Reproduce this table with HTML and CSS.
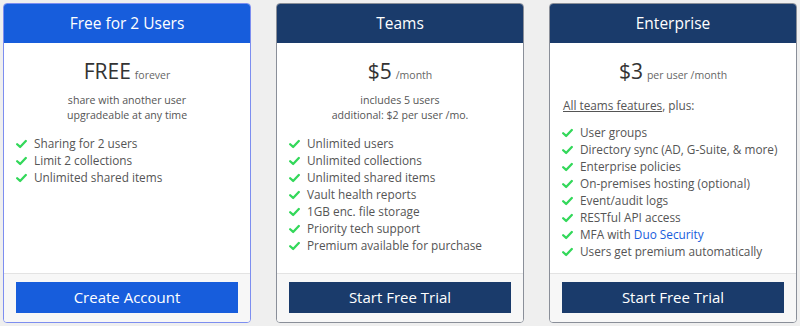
FILE: index.html
```html
<!DOCTYPE html>
<html>
<head>
<meta charset="utf-8">
<link rel="stylesheet" href="styles.css">
</head>
<body>
<svg width="0" height="0" class="defs">
  <defs>
    <symbol id="chk" viewBox="0 0 12 10">
      <path d="M1.3 5.3 L4.5 8.2 L10.7 1.7" fill="none" stroke="currentColor" stroke-width="2.5" stroke-linecap="round" stroke-linejoin="round"/>
    </symbol>
  </defs>
</svg>
<div class="plans">
  <div class="card card-free">
    <div class="head head-free">Free for 2 Users</div>
    <div class="body">
      <div class="price"><span class="amount">FREE</span> <span class="unit">forever</span></div>
      <div class="note">share with another user<br>upgradeable at any time</div>
      <ul class="features">
        <li><svg class="check"><use href="#chk"/></svg><span>Sharing for 2 users</span></li>
        <li><svg class="check"><use href="#chk"/></svg><span>Limit 2 collections</span></li>
        <li><svg class="check"><use href="#chk"/></svg><span>Unlimited shared items</span></li>
      </ul>
    </div>
    <div class="foot"><a class="btn btn-free">Create Account</a></div>
  </div>
  <div class="card">
    <div class="head">Teams</div>
    <div class="body">
      <div class="price"><span class="amount">$5</span> <span class="unit">/month</span></div>
      <div class="note">includes 5 users<br>additional: $2 per user /mo.</div>
      <ul class="features">
        <li><svg class="check"><use href="#chk"/></svg><span>Unlimited users</span></li>
        <li><svg class="check"><use href="#chk"/></svg><span>Unlimited collections</span></li>
        <li><svg class="check"><use href="#chk"/></svg><span>Unlimited shared items</span></li>
        <li><svg class="check"><use href="#chk"/></svg><span>Vault health reports</span></li>
        <li><svg class="check"><use href="#chk"/></svg><span>1GB enc. file storage</span></li>
        <li><svg class="check"><use href="#chk"/></svg><span>Priority tech support</span></li>
        <li><svg class="check"><use href="#chk"/></svg><span>Premium available for purchase</span></li>
      </ul>
    </div>
    <div class="foot"><a class="btn">Start Free Trial</a></div>
  </div>
  <div class="card">
    <div class="head">Enterprise</div>
    <div class="body">
      <div class="price"><span class="amount">$3</span> <span class="unit">per user /month</span></div>
      <div class="intro"><a class="ul">All teams features</a>, plus:</div>
      <ul class="features features-ent">
        <li><svg class="check"><use href="#chk"/></svg><span>User groups</span></li>
        <li><svg class="check"><use href="#chk"/></svg><span>Directory sync (AD, G-Suite, &amp; more)</span></li>
        <li><svg class="check"><use href="#chk"/></svg><span>Enterprise policies</span></li>
        <li><svg class="check"><use href="#chk"/></svg><span>On-premises hosting (optional)</span></li>
        <li><svg class="check"><use href="#chk"/></svg><span>Event/audit logs</span></li>
        <li><svg class="check"><use href="#chk"/></svg><span>RESTful API access</span></li>
        <li><svg class="check"><use href="#chk"/></svg><span>MFA with <a class="link">Duo Security</a></span></li>
        <li><svg class="check"><use href="#chk"/></svg><span>Users get premium automatically</span></li>
      </ul>
    </div>
    <div class="foot"><a class="btn">Start Free Trial</a></div>
  </div>
</div>
</body>
</html>
```

FILE: styles.css
```css
* { box-sizing: border-box; }
html, body { margin: 0; padding: 0; }
body {
  width: 800px;
  height: 326px;
  background: #efefef;
  font-family: "Open Sans", "Noto Sans", sans-serif;
  font-weight: 500;
  color: #555;
  overflow: hidden;
}
.defs { position: absolute; }
.plans {
  display: grid;
  grid-template-columns: 248px 248px 248px;
  column-gap: 25px;
  padding: 3px 0 0 3px;
}
.card {
  height: 320px;
  display: flex;
  flex-direction: column;
  background: #fff;
  border: 1px solid #8a8f99;
  border-radius: 4px;
  overflow: hidden;
}
.card-free { border-color: #7d8ef0; }
.head {
  height: 40px;
  flex: none;
  background: #1a3b6b;
  color: #fff;
  font-size: 15.5px;
  line-height: 41px;
  text-align: center;
  margin: -1px -1px 0;
}
.head-free { background: #175ddc; }
.body {
  flex: 1;
  padding: 14px 0 0 12px;
}
.price {
  height: 28px;
  display: flex;
  justify-content: center;
  align-items: baseline;
  gap: 4px;
  color: #333;
  line-height: 28px;
  padding-right: 12px;
}
.amount { font-size: 21px; font-weight: 400; }
.unit { font-size: 10.5px; color: #666; }
.note {
  text-align: center;
  font-size: 10.6px;
  line-height: 15px;
  margin-top: 8px;
  padding-right: 12px;
}
.intro {
  font-size: 11.8px;
  line-height: 17px;
  margin-top: 12px;
  padding-left: 1px;
}
.ul { text-decoration: underline; color: #555; }
.features {
  list-style: none;
  margin: 12px 0 0;
  padding: 0;
  font-size: 11.8px;
  line-height: 17px;
}
.features-ent { margin-top: 10px; }
.features li {
  display: flex;
  align-items: center;
  white-space: nowrap;
}
.check {
  width: 11px;
  height: 10px;
  color: #33d85a;
  margin-right: 7px;
  flex: none;
}
.link { color: #175ddc; }
.foot {
  flex: none;
  height: 49px;
  background: #f7f7f7;
  border-top: 1px solid #e3e3e3;
  padding: 8px 12px 0;
}
.btn {
  display: block;
  height: 31px;
  background: #1a3b6b;
  color: #fff;
  font-size: 15px;
  line-height: 31px;
  text-align: center;
}
.btn-free { background: #175ddc; }
```
